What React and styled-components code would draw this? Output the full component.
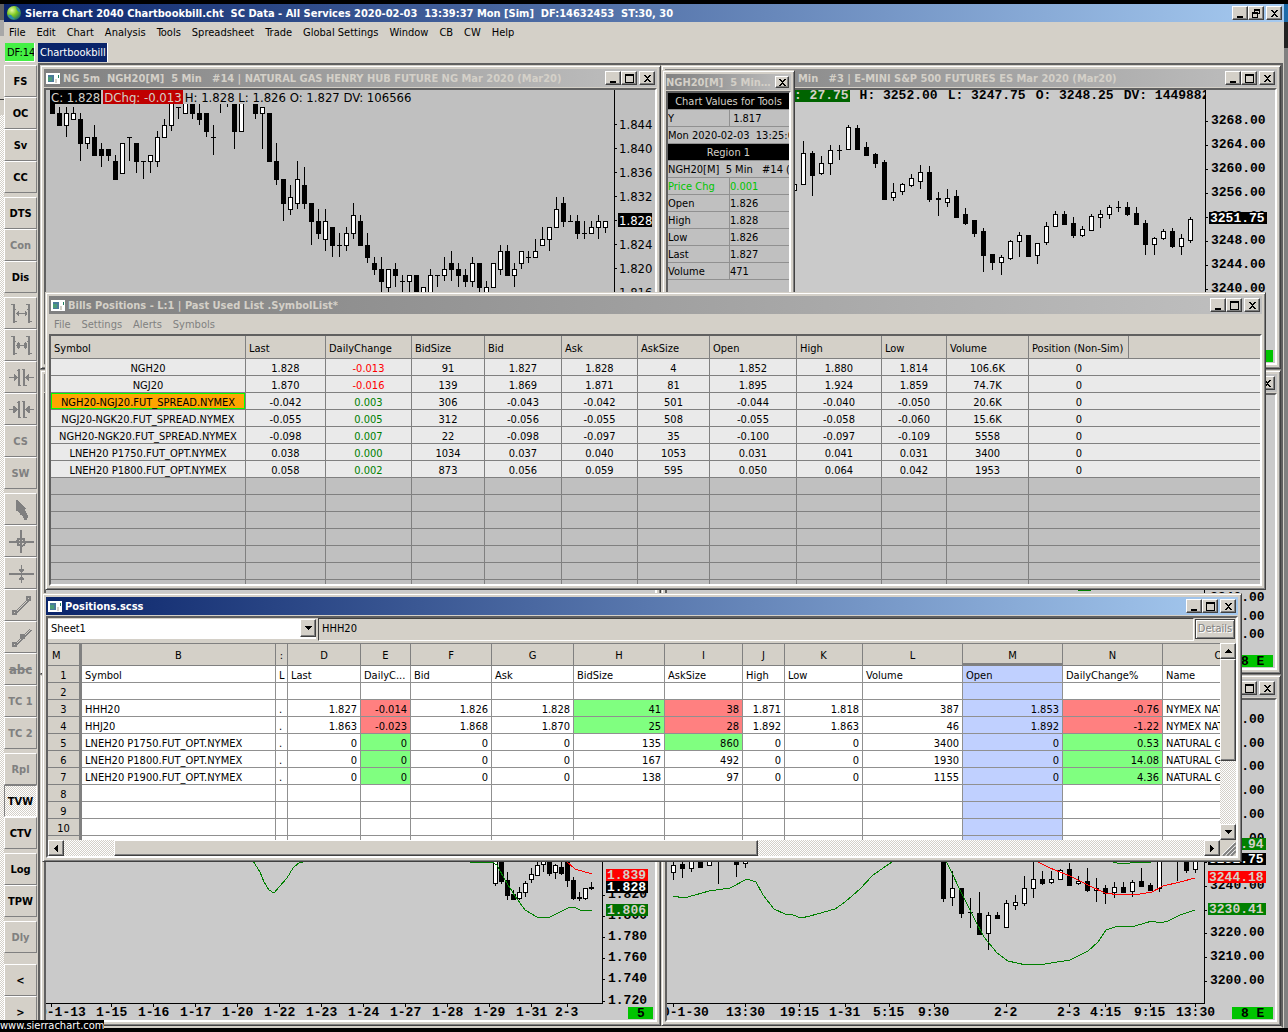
import React from 'react'
import styled, { createGlobalStyle, css } from 'styled-components'

const ui = `'DejaVu Sans Condensed', 'DejaVu Sans', sans-serif`
const mono = `'Liberation Mono', monospace`
const face = '#d4d0c8'

const raised = css`
  border: 1px solid;
  border-color: #fff #404040 #404040 #fff;
  box-shadow: inset -1px -1px #808080;
`
const sunken = css`
  border: 2px solid;
  border-color: #606060 #fff #fff #606060;
`
const checker = css`
  background-color: #fff;
  background-image: repeating-conic-gradient(${face} 0 25%, #fff 0 50%);
  background-size: 2px 2px;
`

const GlobalStyle = createGlobalStyle`
  * { box-sizing: border-box; }
  body { margin: 0; background: #000; font: 11px/14px ${ui}; color: #000; }
  button, select, input { font: inherit; color: inherit; margin: 0; padding: 0; border-radius: 0; }
  table { border-spacing: 0; table-layout: fixed; }
`

const Screen = styled.div`
  min-height: 100vh;
  padding: 4px 0;
  display: flex;
  position: relative;
`
const LeftEdge = styled.div`
  flex: 0 0 4px;
  background:
    linear-gradient(#606060 16px, #a8a8a8 16px 32px, ${face} 32px 95px, #404040 95px 96px, ${face} 96px 111px, transparent 111px),
    repeating-conic-gradient(${face} 0 25%, #fff 0 50%) 0 0 / 2px 2px;
`
const RightEdge = styled.div`
  flex: 0 0 4px;
  background: linear-gradient(#1c6aa8 18px, #222 18px 44px, #808080 44px);
`
const Shell = styled.div`
  flex: 1;
  min-width: 0;
  display: flex;
  flex-direction: column;
  background: ${face};
`
const TitleBar = styled.div`
  height: ${p => (p.$small ? 16 : 18)}px;
  flex: none;
  display: flex;
  align-items: center;
  padding: 0 2px 0 ${p => (p.$small ? 0 : 2)}px;
  color: ${p => (p.$active ? '#fff' : face)};
  background: ${p => (p.$active ? 'linear-gradient(90deg, #0a246a, #a6caf0)' : 'linear-gradient(90deg, #808080, #c0c0c0)')};
  svg { flex: none; }
`
const TitleText = styled.h2`
  flex: 1;
  margin: 0 ${p => (p.$indent === 0 ? 0 : 4)}px 0 ${p => p.$indent ?? 3}px;
  font-size: 11px;
  line-height: 16px;
  padding-top: 1px;
  font-weight: bold;
  white-space: pre;
  overflow: hidden;
  text-overflow: ellipsis;
`
const CaptionButton = styled.button`
  width: ${p => (p.$small ? 14 : 16)}px;
  height: ${p => (p.$small ? 12 : 14)}px;
  background: ${face};
  ${raised}
  display: flex;
  align-items: center;
  justify-content: center;
  margin-left: ${p => (p.$gap ? 2 : 0)}px;
`
const MenuBar = styled.nav`
  display: flex;
  height: 20px;
  align-items: center;
`
const MenuButton = styled.button`
  border: 0;
  background: none;
  && { padding: 2px 6px 0 5px; }
  white-space: nowrap;
  && { color: ${p => (p.$dim ? '#808080' : '#000')}; }
`
const TabBar = styled.div`
  height: 21px;
  display: flex;
  gap: 3px;
  padding: 1px;
`
const Feed = styled.div`
  width: 30px;
  line-height: 20px;
  padding-left: 2px;
  overflow: hidden;
  white-space: nowrap;
  background: #44f044;
  border-right: 1px solid #fff;
  border-bottom: 1px solid #fff;
`
const BookTab = styled.button`
  background: #0a246a;
  && { color: #fff; padding: 1px 1px 0 2px; }
  border: 0;
  border-right: 1px solid #fff;
`
const Body = styled.div`
  flex: 1;
  display: flex;
  min-height: 0;
`
const ToolColumn = styled.div`
  width: 34px;
  flex: none;
  padding-top: 2px;
`
const ToolGroup = styled.div`
  margin-bottom: ${p => p.$after ?? 4}px;
  width: 33px;
`
const ToolButton = styled.button`
  display: flex;
  align-items: center;
  justify-content: center;
  width: 33px;
  height: 32px;
  background: ${face};
  border: 1px solid;
  border-color: #fff #808080 #808080 #fff;
  && {
    padding-top: 2px;
    font-weight: bold;
    color: ${p => (p.$dim ? '#808080' : '#000')};
  }
  ${p => p.$on && css`${checker} border-color: #808080 #fff #fff #808080;`}
`
const Workspace = styled.main`
  flex: 1;
  min-width: 0;
  position: relative;
  overflow: hidden;
  background: #808080;
  border: 2px solid;
  border-color: #606060 #606060 ${face} #606060;
  margin-right: 1px;
`
const Tiles = styled.div`
  display: grid;
  height: 100%;
  grid-template-columns: 621fr 620fr;
  grid-template-rows: 304px 304px 1fr;
  row-gap: 1px;
`
const Frame = styled.section`
  min-width: 0;
  min-height: 0;
  display: flex;
  flex-direction: column;
  background: ${face};
  border: 1px solid;
  border-color: ${face} #404040 #404040 ${face};
  box-shadow: inset 1px 1px #fff, inset -1px -1px #808080;
  padding: 3px;
`
const Floating = styled(Frame)`
  position: absolute;
  left: ${p => p.$left}px;
  right: ${p => p.$right}px;
  top: ${p => p.$top}px;
  height: ${p => p.$height}px;
`
const ValuesFrame = styled(Floating)`
  right: auto;
  width: 133px;
`
const Client = styled.div`
  flex: 1;
  min-height: 0;
  margin-top: ${p => p.$gap ?? 1}px;
  ${sunken}
  background: ${p => p.$bg || face};
  display: flex;
  flex-direction: column;
  overflow: hidden;
`
const Plot = styled.svg`
  display: block;
  width: 100%;
  flex: 1;
  min-height: 0;
  shape-rendering: crispEdges;
`
const PlotText = styled.text`
  font: ${p => (p.$plain ? `13px ${ui}` : `bold 13px ${mono}`)};
`
const Legend = styled.div`
  display: flex;
  flex: none;
  gap: ${p => (p.$mono ? 10 : 2)}px;
  height: ${p => (p.$mono ? 12 : 14)}px;
  font: ${p => (p.$mono ? `bold 13px/12px ${mono}` : `13px/15px ${ui}`)};
  padding-left: ${p => (p.$mono ? 126 : 4)}px;
  margin-right: ${p => (p.$mono ? 69 : 40)}px;
  border-right: 1px solid #000;
  white-space: pre;
  overflow: hidden;
`
const Tag = styled.span`
  flex: none;
  background: ${p => p.$bg};
  color: ${p => p.$fg || face};
  padding: 0 1px;
`
const Value = styled.span`
  flex: none;
`

const ValueTable = styled.table`
  width: 100%;
  th, td {
    height: 17px;
    padding: 1px 0 0 0;
    line-height: 15px;
    font-weight: normal;
    text-align: left;
    white-space: pre;
    overflow: hidden;
    border-bottom: 1px solid #909090;
  }
  td + td, th + td { border-left: 1px solid #909090; }
`
const BlackRow = styled.tr`
  background: #000;
  color: ${face};
  && th { text-align: center; }
`
const GreenRow = styled.tr`
  color: #00c400;
`

const QuoteTable = styled.table`
  width: 100%;
  th {
    height: 23px;
    font-weight: normal;
    text-align: left;
    padding: 3px 0 0 3px;
    background: ${face};
    border-right: 1px solid #808080;
    border-bottom: 1px solid #808080;
  }
  th:last-child, td:last-child { border-right: 0; }
`
const QuoteCell = styled.td`
  height: 17px;
  padding: 3px 0 0;
  line-height: 13px;
  text-align: center;
  white-space: nowrap;
  color: ${p => p.$fg || '#000'};
  background: ${p => (p.$selected ? '#ffa500' : p.$blank ? '#c0c0c0' : '#eaeaea')};
  border-right: ${p => (p.$open ? 0 : 1)}px solid #808080;
  border-bottom: 1px solid #808080;
  ${p => p.$selected && 'box-shadow: inset 0 0 0 1px #0f0;'}
`

const SheetBar = styled.div`
  display: flex;
  height: 25px;
  flex: none;
  padding-right: 1px;
`
const SheetSelect = styled.div`
  display: flex;
  width: 268px;
  height: 20px;
  margin-top: 1px;
  background: #fff;
  select {
    appearance: none;
    border: 0;
    outline: 0;
    flex: 1;
    background: none;
    padding: 0 3px;
  }
`
const DropArrow = styled.span`
  pointer-events: none;
  width: 16px;
  height: 18px;
  background: ${face};
  ${raised}
  display: flex;
  align-items: center;
  justify-content: center;
`
const Formula = styled.input`
  flex: 1;
  min-width: 0;
  height: 23px;
  margin-left: 2px;
  && { margin-left: 2px; padding: 0 0 2px 3px; }
  background: ${face};
  outline: 0;
  border: 1px solid;
  border-color: #404040 #fff #fff #404040;
`
const Details = styled.button`
  width: 40px;
  height: 20px;
  background: ${face};
  border: 1px solid #404040;
  box-shadow: inset 1px 1px #fff, inset -1px -1px #808080;
  && { margin: 1px 0 0 1px; color: #808080; }
  text-shadow: 1px 1px #fff;
`
const SheetArea = styled.div`
  flex: 1;
  min-height: 0;
  display: grid;
  grid-template-columns: minmax(0, 1fr) 16px;
  grid-template-rows: minmax(0, 1fr) 16px;
`
const SheetScroll = styled.div`
  overflow: hidden;
  background: #fff;
  border-top: 1px solid #808080;
`
const Sheet = styled.table`
  width: 1227px;
  th, td {
    padding: 3px 3px 0;
    height: 17px;
    line-height: 13px;
    font-weight: normal;
    white-space: nowrap;
    overflow: hidden;
    border-right: 1px solid #909090;
    border-bottom: 1px solid #909090;
  }
  thead th { height: 22px; background: ${face}; border-color: #808080; padding: 2px 0 0; }
  thead th:first-child { text-align: left; padding-left: 4px; border-right: 3px solid #808080; }
  tbody th { background: ${face}; border-color: #808080; border-right: 3px solid #808080; padding: 3px 0 0; }
`
const ColHead = styled.th`
  ${p => p.$current && 'box-shadow: inset 0 -2px #808080;'}
`
const SheetCell = styled.td`
  text-align: ${p => (p.$left ? 'left' : 'right')};
  background: ${p => p.$bg || '#fff'};
`
const ScrollTrack = styled.div`
  ${checker}
  display: flex;
  flex-direction: ${p => (p.$vertical ? 'column' : 'row')};
`
const ScrollButton = styled.button`
  width: 16px;
  height: 16px;
  flex: none;
  background: ${face};
  ${raised}
  display: flex;
  align-items: center;
  justify-content: center;
`
const Thumb = styled.div`
  background: ${face};
  ${raised}
`
const VThumb = styled(Thumb)`
  height: 102px;
`
const HThumb = styled(Thumb)`
  flex: 643;
`
const Space = styled.div`
  flex: ${p => p.$grow ?? 1};
`
const Grip = styled.svg`
  width: 16px;
  height: 16px;
  background: ${face};
`
const Watermark = styled.a`
  position: absolute;
  left: 0;
  bottom: 0;
  background: #000;
  color: #fff;
  line-height: 12px;
  text-decoration: none;
`
const StruckText = styled.span`
  font-size: 13px;
  text-decoration: line-through;
`

/* ---------- icons ---------- */

const Globe = () => (
  <svg width="16" height="16" viewBox="0 0 16 16" aria-hidden="true">
    <defs>
      <radialGradient id="globe" cx="35%" cy="30%" r="75%">
        <stop offset="0" stopColor="#e4f8a0" />
        <stop offset=".5" stopColor="#7cc81e" />
        <stop offset="1" stopColor="#1c6a70" />
      </radialGradient>
    </defs>
    <circle cx="8" cy="8" r="7" fill="url(#globe)" />
    <path d="M2 10q3-1 4 1t3 3q-5 1-7-4zM10 2q4 1 4 5-3 0-4-5z" fill="#2c8ab0" />
  </svg>
)

const DocIcon = () => (
  <svg width="14" height="11" viewBox="0 0 14 11" shapeRendering="crispEdges" aria-hidden="true">
    <path fill="#fff" d="M0 0h14v11H0z" />
    <path fill="#4a7a9a" d="M2 2h6v7H2z" />
    <path fill="#4a9a78" d="M2 4h4v4H2z" />
    <path fill={face} d="M9 6h2v4H9z" />
    <path fill="#208060" d="M12 2h1v3h-1z" />
  </svg>
)

const glyphs = {
  min: <path d="M2 8h6v2H2z" />,
  max: <path d="M1 1h9v9H1zM2 3v6h7V3z" fillRule="evenodd" />,
  restore: <path d="M3 1h6v5H7v4H1V4h2zM4 3v1h3v1h1V3zM2 6v3h4V6z" fillRule="evenodd" />,
  close: <path d="M2 2h2v1h1v1h1V3h1V2h2v1H8v1H7v1H6v1h1v1h1v1h1v1H7V8H6V7H5v1H4v1H2V8h1V7h1V6h1V5H4V4H3V3H2z" />,
}
const labels = { min: 'Minimize', max: 'Maximize', restore: 'Restore', close: 'Close' }

const Caption = ({ name, small }) => (
  <CaptionButton aria-label={labels[name]} $gap={name === 'close'} $small={small}>
    <svg width="11" height="11" shapeRendering="crispEdges">{glyphs[name]}</svg>
  </CaptionButton>
)

const Arrow = ({ d }) => (
  <svg width="8" height="8" shapeRendering="crispEdges"><path d={d} /></svg>
)

const Stroke = ({ children }) => (
  <svg width="26" height="26" fill="none" stroke="#808080" strokeWidth="1" shapeRendering="crispEdges">{children}</svg>
)
const Rails = () => (
  <path d="M5.5 3v19M6.5 3v19M3 3.5h3M6 20.5h3M6 8.5h2M21.5 3v19M20.5 3v19M18 3.5h3M21 20.5h3M19 8.5h2" />
)
const Bars = () => (
  <path d="M10.5 4v17M11.5 4v17M15.5 4v17M16.5 4v17M9 5.5h3M11 20.5h2M14 4.5h2M16 20.5h3" />
)
const toolIcons = {
  'Widen bars': <Stroke><Rails /><path d="M8 12.5h11M10.5 10v5M9.5 11v3M17.5 10v5M18.5 11v3" /></Stroke>,
  'Widen scale': <Stroke><Rails /><path d="M8 12.5h11M10.5 9v7M9.5 10v5M11.5 10v5M17.5 9v7M18.5 10v5M16.5 10v5" /></Stroke>,
  'Narrow bars': <Stroke><Bars /><path d="M1 12.5h9M17 12.5h9M6.5 9v7M7.5 10v5M8.5 11v3M20.5 9v7M19.5 10v5M18.5 11v3" /></Stroke>,
  'Narrow scale': <Stroke><Bars /><path d="M1 12.5h9M17 12.5h9M5.5 9v7M6.5 9v7M7.5 10v5M8.5 11v3M21.5 9v7M20.5 9v7M19.5 10v5M18.5 11v3" /></Stroke>,
  Pointer: (
    <svg width="26" height="26" shapeRendering="crispEdges">
      <path fill="#808080" d="M8 3h2v1h1v1h1v1h1v1h1v1h1v1h1v1h1v1h1v1h-1v2h1v2h1v2h1v3h-1v2h-3v-2h-1v-2h-1v-1h-2v-2h-1v-1h-1v-1H8z" />
    </svg>
  ),
  Crosshair: <Stroke><path d="M1 12.5h25M13.5 1v23M1 13.5h25M12.5 1v23" /><rect x="9.5" y="9.5" width="7" height="7" rx="2" strokeWidth="2" /></Stroke>,
  'Horizontal line': <Stroke><path d="M1 12.5h25M1 13.5h25M13.5 4v18M11.5 8v2M12.5 8v3M14.5 8v3M15.5 8v2M12.5 16v3M11.5 17v2M14.5 16v3M15.5 17v2" /></Stroke>,
  Line: <Stroke><path d="M7 19L19 7M8 20L20 8M9 20L21 8" /><path d="M5 18h3v3H5zM19 4h3v3h-3z" strokeWidth="2" /></Stroke>,
  Ray: <Stroke><path d="M7 19L22 4M8 20L23 5M9 20L24 5" /><path d="M5 18h3v3H5zM13 10h3v3h-3z" strokeWidth="2" /></Stroke>,
}

/* ---------- window pieces ---------- */

const Captions = () => (
  <>
    <Caption name="min" />
    <Caption name="max" />
    <Caption name="close" />
  </>
)

const Title = ({ text, active, indent }) => (
  <TitleBar $active={active}>
    <DocIcon />
    <TitleText $indent={indent}>{text}</TitleText>
    <Captions />
  </TitleBar>
)

// bars are [open, high, low, close]; null leaves a slot empty
const Candles = ({ bars, x, step, y = v => v }) =>
  bars.map((bar, i) => {
    if (!bar) return null
    const [o, h, l, c] = bar.map(y)
    const cx = x + step * i
    const top = Math.min(o, c)
    return (
      <g key={i}>
        <rect x={cx} y={h} width="1" height={Math.max(l - h, 1)} />
        <rect x={cx - 2} y={top} width="5" height={Math.abs(o - c) + 1} />
        {c < o && <rect x={cx - 1} y={top + 1} width="3" height={Math.max(o - c - 1, 0)} fill="#fff" />}
      </g>
    )
  })

const Curve = ({ points, color = '#008000' }) => (
  <polyline points={points} fill="none" stroke={color} />
)

const PriceTag = ({ x, y, w, bg, fg = face, plain, children }) => (
  <g>
    <rect x={x} y={y - 7} width={w} height={plain ? 14 : 12} fill={bg} />
    <PlotText x={x + 1} y={y + (plain ? 5 : 3)} fill={fg} $plain={plain}>{children}</PlotText>
  </g>
)

/* ---------- data ---------- */

const menus = ['File', 'Edit', 'Chart', 'Analysis', 'Tools', 'Spreadsheet', 'Trade', 'Global Settings', 'Window', 'CB', 'CW', 'Help']

const tools = [
  { items: ['FS', 'OC', 'Sv', 'CC'] },
  { items: ['DTS', '-Con', 'Dis'] },
  { items: ['Widen bars', 'Widen scale', 'Narrow bars', 'Narrow scale', '-CS', '-SW'] },
  { items: ['Pointer', 'Crosshair', 'Horizontal line', 'Line', 'Ray', 'abc', '-TC 1', '-TC 2'] },
  { items: ['-Rpl', '+TVW', 'CTV'] },
  { items: ['Log', 'TPW'] },
  { items: ['-Dly'], after: 11 },
  { items: ['<', '>'], after: 0 },
]

// thousandths above 1.800
const gasBars = [
  [50, 50, 46, 46], [46, 47, 44, 44], [44, 47, 42, 46], [45, 47, 45, 46], [45, 46, 38, 41], [41, 42, 40, 42],
  [42, 44, 39, 39], [40, 41, 37, 39], [40, 40, 38, 39], [38, 39, 35, 35], [36, 41, 36, 41], [42, 42, 38, 42],
  [41, 41, 36, 38], [38, 38, 35, 38], [38, 39, 36, 39], [38, 43, 37, 42], [42, 45, 42, 44], [44, 50, 43, 50],
  [47, 47, 45, 47], [46, 50, 46, 50], [50, 50, 45, 46], [46, 48, 44, 45], [46, 46, 42, 43], [42, 44, 39, 42],
  [50, 50, 46, 50], [50, 50, 47, 50], [50, 50, 40, 43], [43, 50, 43, 50], null, [50, 50, 45, 46],
  [46, 47, 40, 47], [46, 46, 38, 38], [38, 41, 34, 35], [35, 35, 28, 31], [30, 34, 29, 32], [31, 38, 30, 35],
  [34, 37, 30, 31], [31, 31, 24, 28], [28, 30, 25, 26], [25, 30, 23, 28], [27, 27, 22, 24], [24, 26, 22, 24],
  [24, 27, 23, 26], [26, 31, 25, 29], [28, 29, 24, 24], [24, 26, 21, 22], [21, 22, 19, 20], [20, 22, 15, 18],
  [17, 20, 15, 20], [20, 21, 17, 19], [18, 19, 16, 18], [18, 19, 15, 19], [19, 19, 15, 15], [15, 17, 15, 17],
  [15, 20, 15, 19], [19, 19, 17, 19], [19, 22, 18, 20], [21, 23, 18, 20], [20, 21, 17, 19], [19, 20, 17, 18],
  [18, 22, 17, 21], [21, 21, 15, 17], [15, 18, 15, 17], [17, 21, 17, 21], [20, 24, 19, 23], [23, 24, 19, 19],
  [19, 21, 17, 20], [21, 23, 20, 23], [22, 23, 21, 22], [22, 25, 22, 23], [24, 27, 24, 25], [25, 27, 23, 27],
  [27, 32, 27, 30], [31, 32, 27, 28], [28, 29, 28, 28], [28, 29, 25, 26], [26, 28, 25, 26], [26, 28, 26, 27],
  [27, 29, 25, 28], [27, 28, 26, 28],
]

// the remaining series are kept in desktop pixels
const esBars = [
  [190, 184, 190, 184], [184, 141, 184, 153], [153, 151, 196, 175], [173, 156, 175, 163], [163, 145, 175, 150],
  [150, 145, 160, 150], [149, 125, 150, 127], [128, 125, 150, 149], [147, 142, 156, 155], [154, 153, 168, 163],
  [162, 160, 199, 199], [197, 183, 201, 192], [191, 183, 195, 184], [185, 174, 187, 178], [181, 165, 189, 172],
  [172, 166, 202, 199], [198, 192, 216, 199], [202, 189, 207, 198], [196, 190, 217, 217], [214, 208, 225, 223],
  [220, 220, 237, 233], [231, 228, 272, 255], [254, 254, 270, 262], [262, 255, 275, 257], [258, 240, 260, 241],
  [241, 232, 257, 235], [235, 235, 257, 256], [255, 243, 264, 243], [242, 222, 245, 226], [226, 211, 226, 214],
  [214, 211, 225, 224], [223, 217, 238, 235], [235, 226, 237, 229], [230, 214, 231, 216], [217, 210, 228, 214],
  [214, 205, 219, 207], [207, 201, 212, 207], [207, 202, 216, 214], [213, 207, 225, 224], [223, 220, 255, 244],
  [244, 237, 255, 238], [238, 229, 240, 231], [231, 228, 248, 246], [246, 234, 255, 238], [240, 217, 243, 219],
]
const gasDaily = [
  [883, 855, 886, 855], [855, 855, 884, 881], [880, 872, 900, 895], [894, 890, 899, 899], [898, 887, 900, 892],
  [892, 881, 897, 883], [879, 868, 883, 874], [875, 861, 876, 865], [864, 855, 872, 860], [855, 855, 876, 873],
  [872, 864, 879, 865], [867, 861, 875, 873], [855, 855, 887, 880], [880, 877, 900, 898], [897, 892, 901, 898],
  [898, 888, 900, 888], [887, 882, 890, 888],
]
const esEarly = [
  [872, 858, 880, 865], [864, 862, 878, 868], [868, 860, 872, 860], [862, 862, 867, 867], [865, 860, 865, 860],
  [850, 850, 884, 850], null, [855, 855, 877, 864], [863, 855, 868, 855],
]
const esLate = [
  [855, 855, 902, 898], [897, 871, 906, 888], [888, 888, 918, 913], [912, 898, 928, 912], [913, 892, 934, 934],
  [933, 912, 950, 915], [915, 912, 919, 918], [927, 900, 928, 903], [905, 895, 910, 902], [903, 876, 906, 888],
  [888, 860, 898, 879], [879, 871, 885, 883], [882, 871, 884, 879], [879, 869, 880, 870], [869, 863, 885, 885],
  [883, 876, 885, 881], [881, 868, 892, 890], [890, 878, 902, 888], [888, 885, 904, 893], [892, 882, 898, 887],
  [887, 882, 893, 892], [891, 880, 897, 882], [881, 868, 886, 886], [885, 883, 890, 890], [888, 850, 892, 850],
  null, [855, 855, 881, 855], [850, 850, 873, 870], [869, 850, 873, 850],
]

const gasDates = [[39, 51, '0-1-13'], [96, 111, '1-15'], [138, 153, '1-16'], [180, 195, '1-17'], [222, 237, '1-20'], [264, 279, '1-22'],
  [306, 321, '1-23'], [348, 363, '1-24'], [390, 405, '1-27'], [432, 447, '1-28'], [474, 489, '1-29'], [516, 531, '1-31'], [555, 567, '2-3']]
const esDates = [[662, 673, '0-1-30'], [726, 745, '13:30'], [780, 799, '19:15'], [829, 845, '1-31'], [873, 889, '5:15'], [918, 934, '9:30'],
  [994, 1006, '2-2'], [1057, 1069, '2-3'], [1090, 1105, '4:15'], [1134, 1150, '9:15'], [1176, 1195, '13:30']]

const quoteCols = [['Symbol', 195], ['Last', 80], ['DailyChange', 86], ['BidSize', 73], ['Bid', 77], ['Ask', 76], ['AskSize', 72],
  ['Open', 87], ['High', 85], ['Low', 65], ['Volume', 82], ['Position (Non-Sim)', 100]]
const quotes = [
  ['NGH20', '1.828', '-0.013', '91', '1.827', '1.828', '4', '1.852', '1.880', '1.814', '106.6K', '0'],
  ['NGJ20', '1.870', '-0.016', '139', '1.869', '1.871', '81', '1.895', '1.924', '1.859', '74.7K', '0'],
  ['NGH20-NGJ20.FUT_SPREAD.NYMEX', '-0.042', '0.003', '306', '-0.043', '-0.042', '501', '-0.044', '-0.040', '-0.050', '20.6K', '0'],
  ['NGJ20-NGK20.FUT_SPREAD.NYMEX', '-0.055', '0.005', '312', '-0.056', '-0.055', '508', '-0.055', '-0.058', '-0.060', '15.6K', '0'],
  ['NGH20-NGK20.FUT_SPREAD.NYMEX', '-0.098', '0.007', '22', '-0.098', '-0.097', '35', '-0.100', '-0.097', '-0.109', '5558', '0'],
  ['LNEH20 P1750.FUT_OPT.NYMEX', '0.038', '0.000', '1034', '0.037', '0.040', '1053', '0.031', '0.041', '0.031', '3400', '0'],
  ['LNEH20 P1800.FUT_OPT.NYMEX', '0.058', '0.002', '873', '0.056', '0.059', '595', '0.050', '0.064', '0.042', '1953', '0'],
]

const sheetCols = [['M', 34], ['B', 194], [':', 12], ['D', 73], ['E', 50], ['F', 81], ['G', 82], ['H', 91], ['I', 78], ['J', 42],
  ['K', 78], ['L', 100], ['M', 100], ['N', 100], ['O', 112]]
const sheetRows = [
  ['Symbol', 'L', 'Last', 'DailyC...', 'Bid', 'Ask', 'BidSize', 'AskSize', 'High', 'Low', 'Volume', 'Open', 'DailyChange%', 'Name'],
  [],
  ['HHH20', '.', '1.827', 'r-0.014', '1.826', '1.828', 'g41', 'r38', '1.871', '1.818', '387', '1.853', 'r-0.76', 'NYMEX NATURAL GAS'],
  ['HHJ20', '.', '1.863', 'r-0.023', '1.868', '1.870', 'g25', 'r28', '1.892', '1.863', '46', '1.892', 'r-1.22', 'NYMEX NATURAL GAS'],
  ['LNEH20 P1750.FUT_OPT.NYMEX', '.', '0', 'g0', '0', '0', '135', 'g860', '0', '0', '3400', '0', 'g0.53', 'NATURAL GAS'],
  ['LNEH20 P1800.FUT_OPT.NYMEX', '.', '0', 'g0', '0', '0', '167', '492', '0', '0', '1930', '0', 'g14.08', 'NATURAL GAS'],
  ['LNEH20 P1900.FUT_OPT.NYMEX', '.', '0', 'g0', '0', '0', '138', '97', '0', '0', '1155', '0', 'g4.36', 'NATURAL GAS'],
  [], [], [],
]
const tints = { r: '#ff8080', g: '#80ff80' }

const studyValues = [['Open', '1.826'], ['High', '1.828'], ['Low', '1.826'], ['Last', '1.827'], ['Volume', '471']]

/* ---------- windows ---------- */

const GasChart = () => (
  <Frame>
    <Title text="NG 5m  NGH20[M]  5 Min   #14 | NATURAL GAS HENRY HUB FUTURE NG Mar 2020 (Mar20)" />
    <Client $bg="#c0c0c0">
      <Legend>
        <Tag $bg="#000">C: 1.828</Tag>
        <Tag $bg="#c00000">DChg: -0.013</Tag>
        <Value>H: 1.828 L: 1.826 O: 1.827 DV: 106566</Value>
      </Legend>
      <Plot>
        <g transform="translate(-46 -104)">
          <Candles bars={gasBars} x={52} step={7} y={v => 125 + 6 * (44 - v)} />
          <rect x="614" y="104" width="1" height="300" />
          {['1.844', '1.840', '1.836', '1.832', '1.828', '1.824', '1.820', '1.816'].map((t, i) => (
            <g key={t}>
              <rect x="615" y={124 + 24 * i} width="2" height="1" />
              <PlotText $plain x="619" y={129 + 24 * i}>{t}</PlotText>
            </g>
          ))}
          <PriceTag plain x={618} y={220} w={34} bg="#000" fg="#fff">1.828</PriceTag>
        </g>
      </Plot>
    </Client>
  </Frame>
)

const EsChart = () => (
  <Frame>
    <Title indent={117} text="Min   #3 | E-MINI S&P 500 FUTURES ES Mar 2020 (Mar20)" />
    <Client $bg="#cacaca">
      <Legend $mono>
        <Tag $bg="#006400">: 27.75</Tag>
        <Value>H: 3252.00</Value>
        <Value>L: 3247.75</Value>
        <Value>O: 3248.25</Value>
        <Value>DV: 1449882</Value>
      </Legend>
      <Plot>
        <g transform="translate(-667 -102)">
          <Candles bars={esBars} x={794} step={9} />
          <rect x="1205" y="102" width="1" height="260" />
          {[3268, 3264, 3260, 3256, 3252, 3248, 3244, 3240].map((p, i) => (
            <g key={p}>
              <rect x="1206" y={121 + 24 * i} width="2" height="1" />
              <PlotText x="1211" y={124 + 24 * i}>{p}.00</PlotText>
            </g>
          ))}
          <PriceTag x={1209} y={219} w={58} bg="#000" fg="#fff">3251.75</PriceTag>
          <rect x="1232" y="350" width="41" height="12" fill="#00c400" />
        </g>
      </Plot>
    </Client>
  </Frame>
)

const GasDailyChart = () => (
  <Frame>
    <Title text="NG Daily" />
    <Client $bg="#cacaca">
      <Plot>
        <g transform="translate(-46 -700)">
          <Candles bars={gasDaily} x={495} step={6} />
          <Curve points="253,861 260,872 264,882 269,890 274,893 280,886 287,878 293,868 300,862 303,862" />
          <Curve points="470,862 492,862 497,865 505,880 515,896 525,910 537,917 550,917 560,912 568,908 574,907 580,910 592,910" />
          <Curve points="566,861 575,869 592,874" color="#f00" />
          <rect x="602" y="700" width="1" height="304" />
          <rect x="45" y="1003" width="558" height="1" />
          {[['1.820', 895], ['1.800', 916], ['1.780', 937], ['1.760', 958], ['1.740', 979], ['1.720', 1001]].map(([t, y]) => (
            <g key={t}>
              <rect x="603" y={y} width="2" height="1" />
              <PlotText x="608" y={y + 3}>{t}</PlotText>
            </g>
          ))}
          <PriceTag x={606} y={876} w={42} bg="#f00">1.839</PriceTag>
          <PriceTag x={606} y={888} w={42} bg="#000" fg="#fff">1.828</PriceTag>
          <PriceTag x={606} y={911} w={42} bg="#007000">1.806</PriceTag>
          {gasDates.map(([x, tick, t]) => (
            <g key={t}>
              <rect x={tick} y="1004" width="1" height="3" />
              <PlotText x={x} y="1016">{t}</PlotText>
            </g>
          ))}
          <rect x="628" y="1007" width="25" height="12" fill="#00c400" />
          <PlotText x="637" y="1017">5</PlotText>
        </g>
      </Plot>
    </Client>
  </Frame>
)

const EsUpperChart = () => (
  <Frame>
    <Title text="ES" />
    <Client $bg="#cacaca">
      <Plot>
        <g transform="translate(-667 -395)">
          <rect x="1204" y="395" width="1" height="260" />
          {[['3340.00', 598], ['3330.00', 617], ['3320.00', 635]].map(([t, y]) => (
            <PlotText key={t} x="1210" y={y + 3}>{t}</PlotText>
          ))}
          <rect x="1232" y="655" width="41" height="12" fill="#00c400" />
          <PlotText x="1241" y="665">8 E</PlotText>
          <rect x="1078" y="590" width="13" height="1" fill="#008000" />
        </g>
      </Plot>
    </Client>
  </Frame>
)

const EsLowerChart = () => (
  <Frame>
    <Title text="ES" />
    <Client $bg="#cacaca">
      <Plot>
        <g transform="translate(-667 -700)">
          <Candles bars={esEarly} x={673} step={9} />
          <Candles bars={esLate} x={943} step={9} />
          <Curve points="673,896 684,898 695,895 709,891 730,888 747,879 756,882 763,895 774,909 785,914 793,915 801,918 810,916 835,909 845,902 860,889 873,875 892,862" />
          <Curve points="946,861 952,873 960,890 975,920 984,937 997,953 1008,961 1026,965 1045,964 1070,960 1088,951 1098,942 1106,930 1115,927 1135,926 1152,921 1160,923 1168,921 1180,915 1195,910" />
          <Curve points="1113,862 1117,863 1130,863 1151,862" />
          <Curve points="1036,861 1050,868 1070,876 1090,886 1105,893 1120,895 1140,894 1152,892 1163,886 1180,882 1195,878" color="#f00" />
          <rect x="1204" y="700" width="1" height="304" />
          <rect x="660" y="1003" width="545" height="1" />
          {[3310, 3300, 3290, 3280, 3270, 3260, 3250, 3240, 3230, 3220, 3210, 3200].map((p, i) => {
            const y = Math.round(720 + 23.7 * i)
            return (
              <g key={p}>
                <rect x="1205" y={y} width="2" height="1" />
                <PlotText x="1210" y={y + 3}>{p}.00</PlotText>
              </g>
            )
          })}
          <PriceTag x={1208} y={845} w={58} bg="#008000">3257.94</PriceTag>
          <PriceTag x={1208} y={860} w={58} bg="#000" fg="#fff">3251.75</PriceTag>
          <PriceTag x={1208} y={878} w={58} bg="#f00">3244.18</PriceTag>
          <PriceTag x={1208} y={910} w={58} bg="#008000">3230.41</PriceTag>
          {esDates.map(([x, tick, t]) => (
            <g key={tick}>
              <rect x={tick} y="1004" width="1" height="3" />
              <PlotText x={x} y="1016">{t}</PlotText>
            </g>
          ))}
          <rect x="1232" y="1007" width="41" height="12" fill="#00c400" />
          <PlotText x="1241" y="1017">8 E</PlotText>
        </g>
      </Plot>
    </Client>
  </Frame>
)

const ToolValues = () => (
  <ValuesFrame $left={622} $top={5} $height={260}>
    <TitleBar $small>
      <TitleText $indent={0}>NGH20[M]  5 Min  #14</TitleText>
      <Caption name="close" small />
    </TitleBar>
    <Client $bg="#c0c0c0">
      <ValueTable>
        <colgroup><col width="61" /><col /></colgroup>
        <tbody>
          <BlackRow><th colSpan="2">Chart Values for Tools</th></BlackRow>
          <tr><th>Y</th><td> 1.817</td></tr>
          <tr><th colSpan="2">Mon 2020-02-03  13:25:00</th></tr>
          <BlackRow><th colSpan="2">Region 1</th></BlackRow>
          <tr><th colSpan="2">NGH20[M]  5 Min   #14 ()</th></tr>
          <GreenRow><th>Price Chg</th><td>0.001</td></GreenRow>
          {studyValues.map(([k, v]) => (
            <tr key={k}><th>{k}</th><td>{v}</td></tr>
          ))}
        </tbody>
      </ValueTable>
    </Client>
  </ValuesFrame>
)

const BillsPositions = () => (
  <Floating $left={5} $right={15} $top={227} $height={298}>
    <Title text="Bills Positions - L:1 | Past Used List .SymbolList*" />
    <MenuBar>
      {['File', 'Settings', 'Alerts', 'Symbols'].map(m => <MenuButton key={m} $dim>{m}</MenuButton>)}
    </MenuBar>
    <Client $bg="#c0c0c0" $gap={0}>
      <QuoteTable>
        <colgroup>{quoteCols.map(([n, w]) => <col key={n} width={w} />)}<col /></colgroup>
        <thead>
          <tr>{quoteCols.map(([n]) => <th key={n} scope="col">{n}</th>)}<th /></tr>
        </thead>
        <tbody>
          {quotes.map((row, r) => (
            <tr key={row[0]}>
              {row.map((v, c) => (
                <QuoteCell
                  key={c}
                  $selected={r === 2 && c === 0}
                  $open={c === 11}
                  $fg={c === 2 ? (v[0] === '-' ? '#f00' : '#008000') : undefined}
                >
                  {v}
                </QuoteCell>
              ))}
              <QuoteCell />
            </tr>
          ))}
          {[1, 2, 3, 4, 5, 6, 7].map(r => (
            <tr key={r}>
              {quoteCols.map(([n], c) => <QuoteCell key={n} $blank $open={c === 11} />)}
              <QuoteCell $blank />
            </tr>
          ))}
        </tbody>
      </QuoteTable>
    </Client>
  </Floating>
)

const cellFor = (row, r, c) => {
  const raw = row[c] ?? ''
  const tint = tints[raw[0]]
  return (
    <SheetCell
      key={c}
      $left={r === 0 || c === 0 || c === 1 || c === 13}
      $bg={tint || (c === 11 ? '#c0d0ff' : undefined)}
    >
      {tint ? raw.slice(1) : raw}
    </SheetCell>
  )
}

const PositionsSheet = () => (
  <Floating $left={2} $right={39} $top={528} $height={269}>
    <Title active text="Positions.scss" />
    <Client>
      <SheetBar>
        <SheetSelect>
          <select aria-label="Sheet"><option>Sheet1</option></select>
          <DropArrow><Arrow d="M1 2h7v1H7v1H6v1H5v1H4V5H3V4H2V3H1z" /></DropArrow>
        </SheetSelect>
        <Formula aria-label="Cell formula" defaultValue="HHH20" />
        <Details>Details</Details>
      </SheetBar>
      <SheetArea>
        <SheetScroll>
          <Sheet>
            <colgroup>{sheetCols.map(([, w], i) => <col key={i} width={w} />)}</colgroup>
            <thead>
              <tr>{sheetCols.map(([n], i) => <ColHead key={i} scope="col" $current={i === 12}>{n}</ColHead>)}</tr>
            </thead>
            <tbody>
              {sheetRows.map((row, r) => (
                <tr key={r}>
                  <th scope="row">{r + 1}</th>
                  {sheetCols.slice(1).map((_, c) => cellFor(row, r, c))}
                </tr>
              ))}
              <tr>
                <th />
                {sheetCols.slice(1).map((_, c) => cellFor([], 10, c))}
              </tr>
            </tbody>
          </Sheet>
        </SheetScroll>
        <ScrollTrack $vertical>
          <ScrollButton aria-label="Scroll up"><Arrow d="M4 2h1v1h1v1h1v1h1v1H1V5h1V4h1V3h1z" /></ScrollButton>
          <VThumb />
          <Space />
          <ScrollButton aria-label="Scroll down"><Arrow d="M1 2h7v1H7v1H6v1H5v1H4V5H3V4H2V3H1z" /></ScrollButton>
        </ScrollTrack>
        <ScrollTrack>
          <ScrollButton aria-label="Scroll left"><Arrow d="M2 4h1V3h1V2h1V1h1v7H5V7H4V6H3V5H2z" /></ScrollButton>
          <Space $grow={50} />
          <HThumb />
          <Space $grow={447} />
          <ScrollButton aria-label="Scroll right"><Arrow d="M6 4H5V3H4V2H3V1H2v7h1V7h1V6h1V5h1z" /></ScrollButton>
        </ScrollTrack>
        <Grip>
          <path d="M2 15L15 2M6 15L15 6M10 15L15 10" stroke="#fff" />
          <path d="M3 16L16 3M7 16L16 7M11 16L16 11" stroke="#808080" strokeWidth="2" />
        </Grip>
      </SheetArea>
    </Client>
  </Floating>
)

const Tool = ({ name }) => {
  const icon = toolIcons[name]
  if (icon) return <ToolButton aria-label={name}>{icon}</ToolButton>
  if (name === 'abc') return <ToolButton $dim><StruckText>abc</StruckText></ToolButton>
  const flag = name[0]
  return (
    <ToolButton $dim={flag === '-'} $on={flag === '+'}>
      {name.replace(/^[-+]/, '')}
    </ToolButton>
  )
}

const App = () => (
  <>
    <GlobalStyle />
    <Screen>
      <LeftEdge />
      <Shell>
        <TitleBar $active>
          <Globe />
          <TitleText as="h1">Sierra Chart 2040 Chartbookbill.cht  SC Data - All Services 2020-02-03  13:39:37 Mon [Sim]  DF:14632453  ST:30, 30</TitleText>
          <Caption name="min" />
          <Caption name="restore" />
          <Caption name="close" />
        </TitleBar>
        <MenuBar>
          {menus.map(m => <MenuButton key={m}>{m}</MenuButton>)}
        </MenuBar>
        <TabBar>
          <Feed>DF:14632453</Feed>
          <BookTab>Chartbookbill</BookTab>
        </TabBar>
        <Body>
          <ToolColumn>
            {tools.map((g, i) => (
              <ToolGroup key={i} $after={g.after}>
                {g.items.map(t => <Tool key={t} name={t} />)}
              </ToolGroup>
            ))}
          </ToolColumn>
          <Workspace>
            <Tiles>
              <GasChart />
              <EsChart />
              <Frame>
                <Title text="NG" />
                <Client $bg="#cacaca" />
              </Frame>
              <EsUpperChart />
              <GasDailyChart />
              <EsLowerChart />
            </Tiles>
            <ToolValues />
            <BillsPositions />
            <PositionsSheet />
          </Workspace>
        </Body>
      </Shell>
      <RightEdge />
      <Watermark href="#">www.sierrachart.com</Watermark>
    </Screen>
  </>
)

export default App
